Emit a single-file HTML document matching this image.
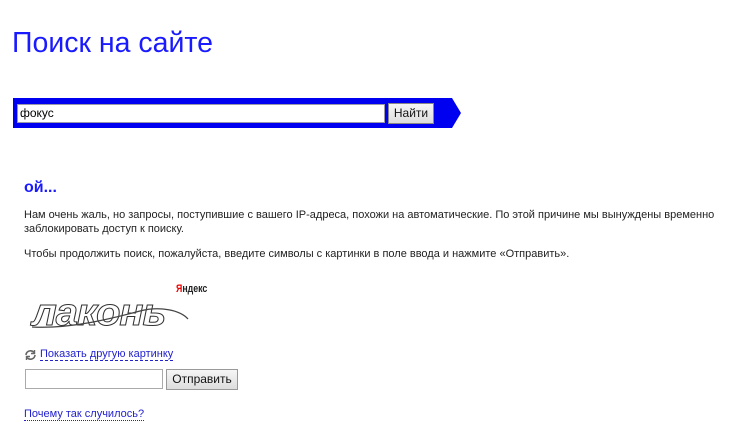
<!DOCTYPE html><html><head><meta charset="utf-8"><style>
body{margin:0;width:732px;height:431px;background:#fff;font-family:"Liberation Sans",Arial,sans-serif;position:relative;overflow:hidden}
.a{position:absolute}
h1{position:absolute;left:12px;top:27px;margin:0;font-weight:normal;font-size:28.5px;color:#1a1aff}
.t{font-size:11px;color:#222;left:24px;line-height:14px}
a{color:#2222cc;text-decoration:none;border-bottom:1px dashed #2222cc}
</style></head><body>
<h1>Поиск на сайте</h1>
<div class="a" style="left:13px;top:98px;width:439px;height:30px;background:#0000f0"></div>
<div class="a" style="left:452px;top:98px;width:0;height:0;border-top:15px solid transparent;border-bottom:15px solid transparent;border-left:9px solid #0000f0"></div>
<div class="a" style="left:17px;top:104px;width:364px;height:17px;background:#fff;border:1px solid #99a;font-size:12px;line-height:17px;padding-left:2px;box-sizing:content-box">фокус</div>
<div class="a" style="left:388px;top:103px;width:44px;height:19px;background:linear-gradient(#f6f6f6,#ddd);border:1px solid #888;font-size:12px;line-height:19px;text-align:center;color:#111">Найти</div>
<div class="a" style="left:24px;top:179px;font-size:16px;font-weight:bold;color:#1a1aff">ой...</div>
<div class="a t" style="top:208px;width:700px">Нам очень жаль, но запросы, поступившие с вашего IP-адреса, похожи на автоматические. По этой причине мы вынуждены временно заблокировать доступ к поиску.</div>
<div class="a t" style="top:247px">Чтобы продолжить поиск, пожалуйста, введите символы с картинки в поле ввода и нажмите «Отправить».</div>
<div class="a" style="left:176px;top:283px;font-size:11px;font-weight:bold;color:#222;transform:scaleX(0.8);transform-origin:left"><span style="color:#e00">Я</span>ндекс</div>
<div class="a" style="left:32px;top:292px;font-size:38px;font-style:italic;font-weight:bold;color:#fff;-webkit-text-stroke:1px #333;letter-spacing:-1px;transform:scaleX(1.05);transform-origin:left">лаконь</div>
<svg class="a" style="left:30px;top:305px" width="160" height="25"><path d="M2 22C40 24 80 14 110 6 130 1 150 5 158 14" fill="none" stroke="#444" stroke-width="1.3"/></svg>
<svg class="a" style="left:24px;top:349px" width="13" height="12" viewBox="0 0 13 12"><path d="M2 6a4.5 4.5 0 0 1 8-2.5M11 6a4.5 4.5 0 0 1-8 2.5" fill="none" stroke="#666" stroke-width="1.6"/><path d="M10.5 1v3.5H7M2.5 11V7.5H6" fill="none" stroke="#666" stroke-width="1.4"/></svg>
<div class="a" style="left:40px;top:348px;font-size:11px;line-height:13px"><a>Показать другую картинку</a></div>
<div class="a" style="left:25px;top:369px;width:136px;height:18px;border:1px solid #aaa"></div>
<div class="a" style="left:166px;top:369px;width:70px;height:19px;background:linear-gradient(#f6f6f6,#ddd);border:1px solid #999;font-size:12px;line-height:19px;text-align:center;color:#111">Отправить</div>
<div class="a" style="left:24px;top:408px;font-size:11px;line-height:13px"><a style="border-bottom-style:dotted">Почему так случилось?</a></div>
</body></html>
